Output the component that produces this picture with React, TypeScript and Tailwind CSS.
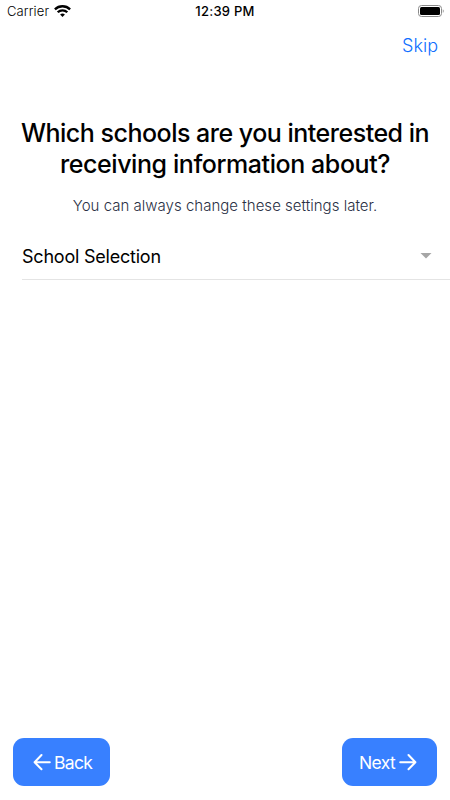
import { ReactNode } from 'react';

const WifiIcon = () => (
    <svg width="17" height="12" viewBox="0 0 17 12" fill="none" stroke="#000" strokeWidth="2.3">
        <path d="M0.9 4.4a10.8 10.8 0 0 1 15.2 0" />
        <path d="M3.7 7.3a6.8 6.8 0 0 1 9.6 0" />
        <path d="M8.5 12 6.1 9.6a3.4 3.4 0 0 1 4.8 0Z" fill="#000" stroke="none" />
    </svg>
);

const BatteryIcon = () => (
    <svg width="27" height="12" viewBox="0 0 27 12" fill="none">
        <rect x="0.5" y="0.5" width="23" height="11" rx="3" stroke="#8a8a8a" />
        <rect x="2" y="2" width="20" height="8" rx="1.5" fill="#000" />
        <path d="M24.8 4.2c1.2.5 1.2 3.1 0 3.6Z" fill="#8a8a8a" />
    </svg>
);

const ArrowIcon = ({ direction }: { direction: 'back' | 'forward' }) => (
    <svg
        width="18"
        height="18"
        viewBox="0 0 18 18"
        fill="none"
        stroke="#fff"
        strokeWidth="2"
        strokeLinecap="round"
        strokeLinejoin="round"
        className="shrink-0"
    >
        {direction === 'back' ? (
            <path d="M8.5 2 1.6 9.2l6.9 7.1M2 9.2h14.8" />
        ) : (
            <path d="m9.5 2 6.9 7.2-6.9 7.1M16 9.2H1.2" />
        )}
    </svg>
);

const NavButton = ({ className, children }: { className: string; children: ReactNode }) => (
    <button
        className={`flex h-12 items-center rounded-[11px] bg-[#3880ff] text-[17.5px] leading-6 tracking-[-0.65px] text-white ${className}`}
    >
        {children}
    </button>
);

export default function App() {
    return (
        <div className="flex h-[800px] w-[450px] flex-col overflow-hidden bg-white font-['Inter',sans-serif] text-black">
            <div className="grid h-6 grid-cols-3 items-start pl-[7px] pr-[5px] pt-[3px] text-[13px] leading-4">
                <div className="flex items-center gap-[5px]">
                    <span className="font-light tracking-[0.1px]">Carrier</span>
                    <WifiIcon />
                </div>
                <span className="-ml-[2px] text-center font-medium tracking-[0.25px]">12:39 PM</span>
                <div className="flex justify-end pt-[2px]">
                    <BatteryIcon />
                </div>
            </div>

            <header className="flex h-11 items-center justify-end pr-3">
                <button className="text-[18px] font-light leading-6 text-[#0f6fff]">Skip</button>
            </header>

            <main className="flex flex-1 flex-col pt-[50px]">
                <h1 className="text-center text-[25px] font-medium leading-[30.5px] tracking-[-0.5px]">
                    <span className="block whitespace-nowrap">Which schools are you interested in</span>
                    <span className="block whitespace-nowrap tracking-[-0.42px]">receiving information about?</span>
                </h1>
                <p className="mt-[15px] whitespace-nowrap text-center text-[15px] font-light leading-6 tracking-[0.02px] text-[#2a3044]">
                    You can always change these settings later.
                </p>
                <div className="ml-[22px] mt-4 flex h-[46px] items-center justify-between border-b border-[#e4e4e4] pr-[18px]">
                    <span className="text-[18px] leading-6 tracking-[-0.22px]">School Selection</span>
                    <svg width="12" height="6" viewBox="0 0 12 6" className="mb-[2px]">
                        <path d="M0.5 0h11L6 5.5Z" fill="#a6a6a6" />
                    </svg>
                </div>
            </main>

            <footer className="flex items-center justify-between pb-[14px] pl-[13px] pr-[13px]">
                <NavButton className="w-[97px] gap-[3px] pl-5">
                    <ArrowIcon direction="back" />
                    <span className="pt-px">Back</span>
                </NavButton>
                <NavButton className="w-[95px] gap-[4px] pl-[17px]">
                    <span className="pt-px">Next</span>
                    <ArrowIcon direction="forward" />
                </NavButton>
            </footer>
        </div>
    );
}
